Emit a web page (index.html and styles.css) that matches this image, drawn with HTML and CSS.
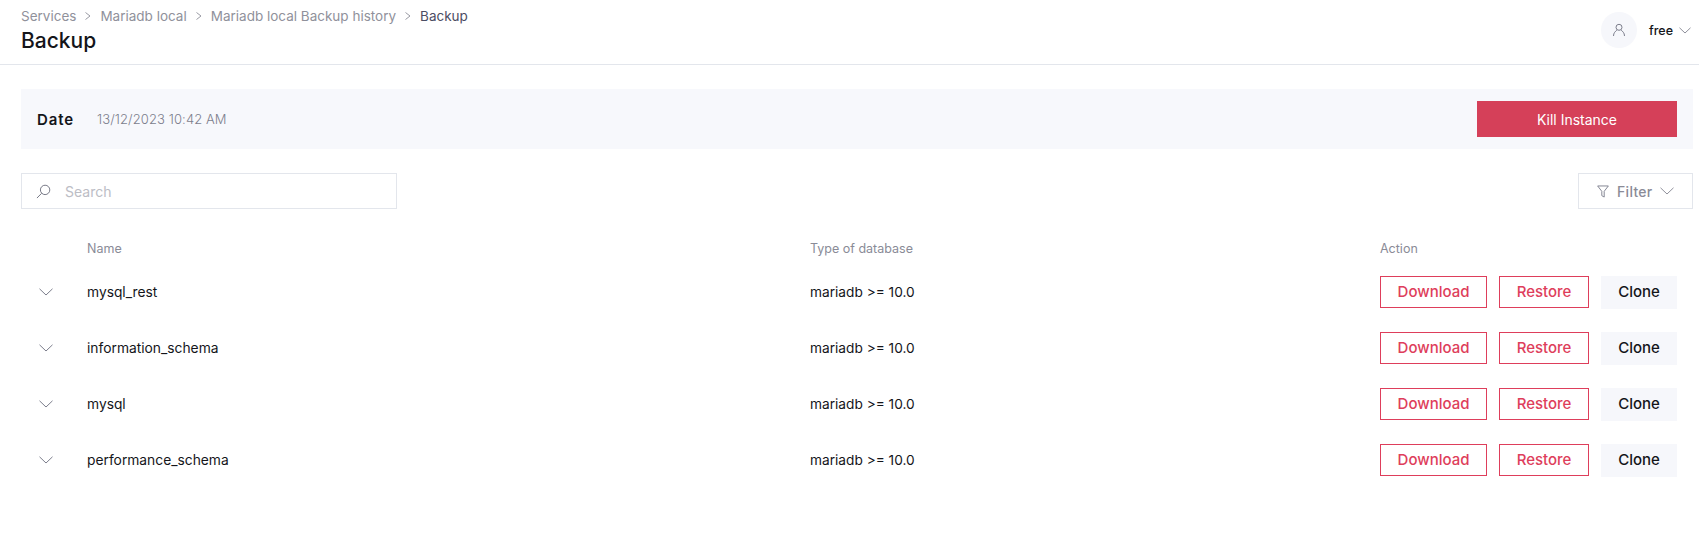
FILE: index.html
```html
<!DOCTYPE html>
<html lang="en">
<head>
    <meta charset="UTF-8">
    <meta name="viewport" content="width=device-width, initial-scale=1.0">
    <title>Backup</title>
    <link rel="stylesheet" href="styles.css">
</head>
<body>
    <header class="topbar">
        <div class="topbar-left">
            <nav class="breadcrumb">
                <span>Services</span>
                <svg class="crumb-sep" viewBox="0 0 8 10"><path d="M1.5 1.5 L6 5 L1.5 8.5"/></svg>
                <span>Mariadb local</span>
                <svg class="crumb-sep" viewBox="0 0 8 10"><path d="M1.5 1.5 L6 5 L1.5 8.5"/></svg>
                <span>Mariadb local Backup history</span>
                <svg class="crumb-sep" viewBox="0 0 8 10"><path d="M1.5 1.5 L6 5 L1.5 8.5"/></svg>
                <span class="crumb-current">Backup</span>
            </nav>
            <h1 class="page-title">Backup</h1>
        </div>
        <div class="user">
            <div class="avatar">
                <svg viewBox="0 0 14 14"><circle cx="7" cy="4.3" r="3"/><path d="M1.5 13 C1.5 9.8 3.5 8.3 4.8 7.2 M12.5 13 C12.5 9.8 10.5 8.3 9.2 7.2"/></svg>
            </div>
            <span class="user-name">free</span>
            <svg class="chevron chevron-user" viewBox="0 0 12 7"><path d="M0.5 0.8 L6 6 L11.5 0.8"/></svg>
        </div>
    </header>

    <main class="content">
        <section class="banner">
            <div class="banner-info">
                <span class="banner-label">Date</span>
                <span class="banner-value">13/12/2023 10:42 AM</span>
            </div>
            <button class="btn-kill">Kill Instance</button>
        </section>

        <section class="toolbar">
            <label class="search">
                <svg viewBox="0 0 16 16"><circle cx="9.7" cy="6.3" r="5"/><path d="M6 9.9 L1 15"/></svg>
                <span>Search</span>
            </label>
            <button class="filter">
                <svg class="filter-icon" viewBox="0 0 13 14"><path d="M0.7 1 H12.3 L7.8 6.8 V13 L5.2 11.5 V6.8 Z"/></svg>
                <span>Filter</span>
                <svg class="chevron chevron-filter" viewBox="0 0 14 8"><path d="M0.5 0.8 L7 7 L13.5 0.8"/></svg>
            </button>
        </section>

        <section class="table">
            <div class="row row-head">
                <span></span>
                <span>Name</span>
                <span>Type of database</span>
                <span>Action</span>
            </div>
            <div class="row">
                <svg class="chevron chevron-row" viewBox="0 0 14 8"><path d="M0.5 0.8 L7 7 L13.5 0.8"/></svg>
                <span class="cell-name">mysql_rest</span>
                <span class="cell-type">mariadb &gt;= 10.0</span>
                <div class="actions">
                    <button class="btn btn-download">Download</button>
                    <button class="btn btn-restore">Restore</button>
                    <button class="btn btn-clone">Clone</button>
                </div>
            </div>
            <div class="row">
                <svg class="chevron chevron-row" viewBox="0 0 14 8"><path d="M0.5 0.8 L7 7 L13.5 0.8"/></svg>
                <span class="cell-name">information_schema</span>
                <span class="cell-type">mariadb &gt;= 10.0</span>
                <div class="actions">
                    <button class="btn btn-download">Download</button>
                    <button class="btn btn-restore">Restore</button>
                    <button class="btn btn-clone">Clone</button>
                </div>
            </div>
            <div class="row">
                <svg class="chevron chevron-row" viewBox="0 0 14 8"><path d="M0.5 0.8 L7 7 L13.5 0.8"/></svg>
                <span class="cell-name">mysql</span>
                <span class="cell-type">mariadb &gt;= 10.0</span>
                <div class="actions">
                    <button class="btn btn-download">Download</button>
                    <button class="btn btn-restore">Restore</button>
                    <button class="btn btn-clone">Clone</button>
                </div>
            </div>
            <div class="row">
                <svg class="chevron chevron-row" viewBox="0 0 14 8"><path d="M0.5 0.8 L7 7 L13.5 0.8"/></svg>
                <span class="cell-name">performance_schema</span>
                <span class="cell-type">mariadb &gt;= 10.0</span>
                <div class="actions">
                    <button class="btn btn-download">Download</button>
                    <button class="btn btn-restore">Restore</button>
                    <button class="btn btn-clone">Clone</button>
                </div>
            </div>
        </section>
    </main>
</body>
</html>
```

FILE: styles.css
```css
* {
    box-sizing: border-box;
}

body {
    font-family: Inter, "Liberation Sans", sans-serif;
    font-size: 14px;
    color: #14151a;
    background-color: #fff;
    margin: 0;
    overflow: hidden;
}

svg {
    fill: none;
    stroke-width: 1;
}

button {
    font-family: inherit;
    cursor: pointer;
    border-radius: 0;
}

.topbar {
    display: flex;
    justify-content: space-between;
    height: 65px;
    padding: 7px 8px 0 21px;
    border-bottom: 1px solid #e3e6ec;
}

.breadcrumb {
    display: flex;
    align-items: center;
    height: 18px;
    font-size: 13.5px;
    color: #90919b;
}

.crumb-sep {
    width: 8px;
    height: 10px;
    margin: 0 8px;
    stroke: #9a9ba4;
}

.crumb-current {
    color: #4c4d63;
}

.page-title {
    font-size: 21px;
    font-weight: 500;
    line-height: 24px;
    margin: 4px 0 0;
    color: #14151a;
}

.user {
    display: flex;
    align-items: center;
    height: 36px;
    margin-top: 5px;
}

.avatar {
    display: flex;
    justify-content: center;
    align-items: center;
    width: 36px;
    height: 36px;
    border-radius: 50%;
    background-color: #f6f7fb;
}

.avatar svg {
    width: 14px;
    height: 14px;
    stroke: #7c7e8c;
}

.user-name {
    margin-left: 12px;
    font-size: 12.5px;
    font-weight: 500;
}

.chevron {
    stroke: #8f909b;
}

.chevron-user {
    width: 12px;
    height: 7px;
    margin-left: 6px;
}

.content {
    padding: 24px 6px 0 21px;
}

.banner {
    display: flex;
    justify-content: space-between;
    align-items: center;
    height: 60px;
    padding: 0 16px;
    background-color: #f7f8fc;
}

.banner-info {
    display: flex;
    align-items: center;
}

.banner-label {
    width: 60px;
    font-size: 15px;
    font-weight: 600;
    letter-spacing: 0.9px;
}

.banner-value {
    font-size: 13px;
    font-weight: 300;
    letter-spacing: 0.1px;
    color: #7c7e8c;
}

.btn-kill {
    width: 200px;
    height: 36px;
    border: none;
    background-color: #d54059;
    color: #fff;
    font-size: 14px;
}

.toolbar {
    display: flex;
    justify-content: space-between;
    margin-top: 24px;
}

.search {
    display: flex;
    align-items: center;
    width: 376px;
    height: 36px;
    padding-left: 14px;
    border: 1px solid #e3e6ec;
    font-size: 14px;
    color: #bcbdc5;
}

.search svg {
    width: 15px;
    height: 15px;
    margin-right: 14px;
    stroke: #6e707e;
}

.filter {
    display: flex;
    align-items: center;
    width: 115px;
    height: 36px;
    padding: 0 0 0 18px;
    border: 1px solid #e3e6ec;
    background-color: #fff;
    font-size: 14px;
    font-weight: 500;
    letter-spacing: 0.3px;
    color: #8a8b97;
}

.filter-icon {
    width: 12px;
    height: 13px;
    margin-right: 8px;
    stroke: #7c7e8c;
}

.chevron-filter {
    width: 14px;
    height: 8px;
    margin-left: 7px;
}

.table {
    margin-top: 23px;
}

.row {
    display: grid;
    grid-template-columns: 66px 723px 570px 1fr;
    align-items: center;
    height: 56px;
    font-size: 14px;
}

.row-head {
    height: 32px;
    font-size: 12.5px;
    color: #8a8b97;
}

.cell-name {
    font-size: 13.8px;
}

.cell-type {
    font-size: 13.7px;
}

.chevron-row {
    width: 14px;
    height: 8px;
    margin-left: 18px;
    stroke: #7c7e8c;
}

.actions {
    display: flex;
    gap: 12px;
}

.btn {
    height: 32px;
    padding: 0;
    font-size: 15px;
    font-weight: 500;
}

.btn-download,
.btn-restore {
    border: 1px solid #de3e5b;
    background-color: #fff;
    color: #de3e5b;
}

.btn-download {
    width: 107px;
}

.btn-restore {
    width: 90px;
}

.btn-clone {
    width: 76px;
    height: 33px;
    padding-bottom: 1px;
    border: none;
    background-color: #f6f7fb;
    color: #14151a;
}
```
